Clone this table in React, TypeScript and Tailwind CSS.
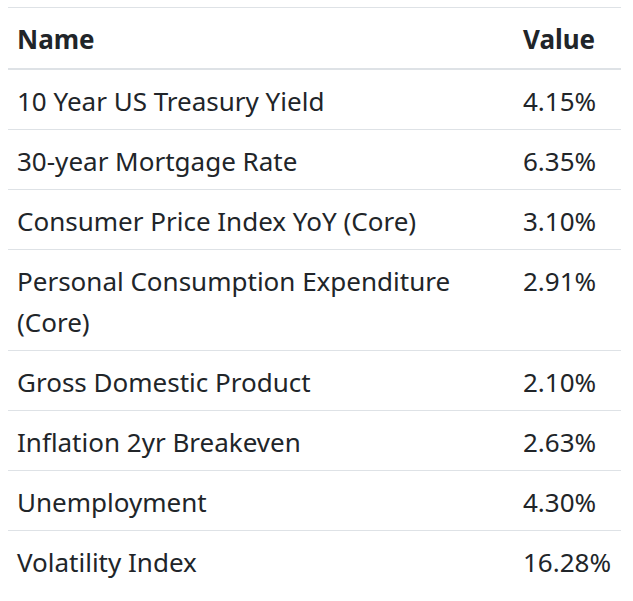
import React from 'react';

const rows = [
  { name: '10 Year US Treasury Yield', value: '4.15%' },
  { name: '30-year Mortgage Rate', value: '6.35%' },
  { name: 'Consumer Price Index YoY (Core)', value: '3.10%' },
  { name: 'Personal Consumption Expenditure (Core)', value: '2.91%' },
  { name: 'Gross Domestic Product', value: '2.10%' },
  { name: 'Inflation 2yr Breakeven', value: '2.63%' },
  { name: 'Unemployment', value: '4.30%' },
  { name: 'Volatility Index', value: '16.28%' },
];

export default function App() {
  return (
    <div className="bg-white min-h-screen pt-[7px] px-[8px] text-[#212529] font-['Segoe_UI','Noto_Sans',sans-serif] text-[26px] leading-[41px]">
      <table className="w-[613px] border-collapse">
        <thead>
          <tr>
            <th className="text-left font-bold align-bottom border-t border-b-2 border-[#dee2e6] pl-[9px] pr-[9px] pt-[11px] pb-[8px]">Name</th>
            <th className="w-[108px] text-left font-bold align-bottom border-t border-b-2 border-[#dee2e6] pl-[10px] pr-[6px] pt-[11px] pb-[8px]">Value</th>
          </tr>
        </thead>
        <tbody>
          {rows.map((r, i) => (
            <tr key={i}>
              <td className={`align-top pl-[9px] pr-[40px] pt-[11px] pb-[7px] ${i > 0 ? 'border-t border-[#dee2e6]' : ''}`}>{r.name}</td>
              <td className={`align-top pl-[10px] pr-[6px] pt-[11px] pb-[7px] whitespace-nowrap ${i > 0 ? 'border-t border-[#dee2e6]' : ''}`}>{r.value}</td>
            </tr>
          ))}
        </tbody>
      </table>
    </div>
  );
}
